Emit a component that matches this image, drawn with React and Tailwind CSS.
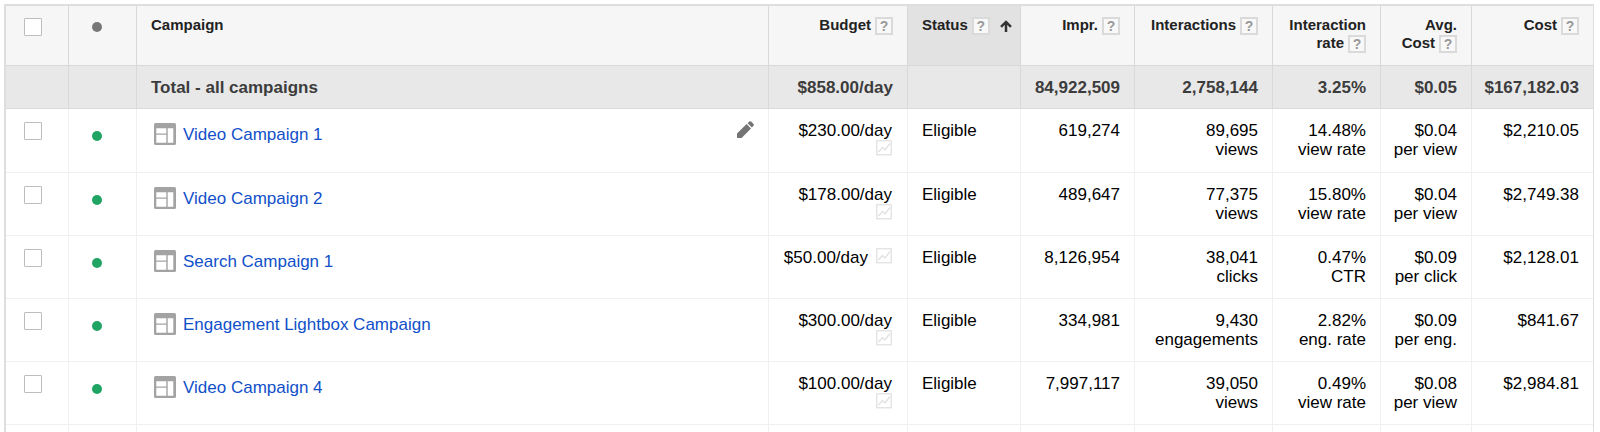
import React from 'react';

const campaigns = [
  { name: 'Video Campaign 1', editable: true, budget: '$230.00/day', impr: '619,274', inter: ['89,695', 'views'], rate: ['14.48%', 'view rate'], avg: ['$0.04', 'per view'], cost: '$2,210.05' },
  { name: 'Video Campaign 2', budget: '$178.00/day', impr: '489,647', inter: ['77,375', 'views'], rate: ['15.80%', 'view rate'], avg: ['$0.04', 'per view'], cost: '$2,749.38' },
  { name: 'Search Campaign 1', budget: '$50.00/day', inline: true, impr: '8,126,954', inter: ['38,041', 'clicks'], rate: ['0.47%', 'CTR'], avg: ['$0.09', 'per click'], cost: '$2,128.01' },
  { name: 'Engagement Lightbox Campaign', budget: '$300.00/day', impr: '334,981', inter: ['9,430', 'engagements'], rate: ['2.82%', 'eng. rate'], avg: ['$0.09', 'per eng.'], cost: '$841.67' },
  { name: 'Video Campaign 4', budget: '$100.00/day', impr: '7,997,117', inter: ['39,050', 'views'], rate: ['0.49%', 'view rate'], avg: ['$0.08', 'per view'], cost: '$2,984.81' },
];

const Help = ({ label }) => (
  <button
    type="button"
    aria-label={`Help: ${label}`}
    className="ml-1 inline-flex h-[18px] w-[18px] items-center justify-center border-2 border-[#dadada] bg-[#f8f8f8] align-middle text-sm leading-none font-bold text-[#999]"
  >
    ?
  </button>
);

const Checkbox = ({ label }) => (
  <input
    type="checkbox"
    aria-label={label}
    className="mt-px ml-1 block h-[18px] w-[18px] appearance-none rounded-[1px] border border-[#bdbdbd] bg-white"
  />
);

const LayoutIcon = () => (
  <svg viewBox="0 0 22 22" className="h-[22px] w-[22px] shrink-0" aria-hidden="true">
    <rect width="22" height="22" rx="1.5" fill="#a3a3a3" />
    <path d="M2.3 5.2h10v5.4h-10zM2.3 11.7h10v8h-10zM13.7 5.2h5.6v14.5h-5.6z" fill="#fff" />
  </svg>
);

const PencilIcon = () => (
  <svg viewBox="0 0 17 17" className="h-[17px] w-[17px]" aria-hidden="true">
    <path
      fill="#757575"
      d="M0 17v-4.6L9.6 3.1l4.4 4.4L4.6 17zM10.6 2.2l1.7-1.6q1-.8 1.9 0l2.3 2.3q.8.9 0 1.8l-1.6 1.8z"
    />
  </svg>
);

const ChartIcon = () => (
  <svg viewBox="0 0 16 16" className="h-4 w-4" fill="none" stroke="#e2e2e2" aria-hidden="true">
    <rect x="0.75" y="0.75" width="14.5" height="14" strokeWidth="1.3" />
    <path d="M2.5 12l4-4.5 2.5 2.5 5-6.5" strokeWidth="1.4" />
  </svg>
);

const head = 'border-r border-b border-[#d9d9d9] px-[14px] pt-[10px] align-top text-[15px] leading-[18px] font-bold text-[#222]';
const total = 'border-r border-b border-[#d9d9d9] px-[14px] pt-px align-middle text-[17px] font-bold text-[#3c3c3c]';
const cell = 'border-r border-b border-[#f0f0f0] px-[14px] pt-3 align-top text-[17px] leading-[19px] whitespace-nowrap text-black';

const Stacked = ({ lines }) => (
  <td className={`${cell} pl-1 text-right`}>
    {lines[0]}
    <br />
    {lines[1]}
  </td>
);

const App = () => {
  return (
    <main className="pt-1 pr-[6px] pl-1 font-['Liberation_Sans',Arial,sans-serif]">
      <table className="w-full table-fixed border-separate border-spacing-0 border-t-2 border-r border-l-2 border-[#dedede]">
        <colgroup>
          <col className="w-[63px]" />
          <col className="w-[68px]" />
          <col />
          <col className="w-[139px]" />
          <col className="w-[113px]" />
          <col className="w-[114px]" />
          <col className="w-[138px]" />
          <col className="w-[108px]" />
          <col className="w-[91px]" />
          <col className="w-[121px]" />
        </colgroup>
        <thead>
          <tr className="h-[60px] bg-[#f6f6f6]">
            <th className={`${head} pt-[11px]`}><Checkbox label="Select all campaigns" /></th>
            <th className={head}>
              <span className="mt-[6px] ml-[9px] block h-[10px] w-[10px] rounded-full bg-[#777]" />
            </th>
            <th className={`${head} text-left`}>Campaign</th>
            <th className={`${head} text-right`}>Budget<Help label="Budget" /></th>
            <th className={`${head} bg-[#e2e2e2] text-left whitespace-nowrap`}>
              Status<Help label="Status" />
              <svg viewBox="0 0 12 12" className="ml-[10px] inline h-3 w-3" fill="none" stroke="#333" strokeWidth="2.5" aria-hidden="true">
                <path d="M6 12V2M1 6.8L6 1.9l5 4.9" />
              </svg>
            </th>
            <th className={`${head} text-right`}>Impr.<Help label="Impressions" /></th>
            <th className={`${head} text-right whitespace-nowrap`}>Interactions<Help label="Interactions" /></th>
            <th className={`${head} text-right`}>Interaction<br />rate<Help label="Interaction rate" /></th>
            <th className={`${head} text-right`}>Avg.<br />Cost<Help label="Average cost" /></th>
            <th className={`${head} border-r-0 text-right`}>Cost<Help label="Cost" /></th>
          </tr>
        </thead>
        <tbody>
          <tr className="h-[43px] bg-[#e8e8e8]">
            <td className={total} />
            <td className={total} />
            <td className={total}>Total - all campaigns</td>
            <td className={`${total} pl-1 text-right`}>$858.00/day</td>
            <td className={total} />
            <td className={`${total} pl-1 text-right`}>84,922,509</td>
            <td className={`${total} pl-1 text-right`}>2,758,144</td>
            <td className={`${total} pl-1 text-right`}>3.25%</td>
            <td className={`${total} pl-1 text-right`}>$0.05</td>
            <td className={`${total} border-r-0 pl-1 text-right`}>$167,182.03</td>
          </tr>

          {campaigns.map((c) => (
            <tr key={c.name} className="h-[63px] nth-2:h-16">
              <td className={cell}><Checkbox label={`Select ${c.name}`} /></td>
              <td className={cell}>
                <span className="mt-[10px] ml-[9px] block h-[10px] w-[10px] rounded-full bg-[#1fa463]" />
              </td>
              <td className={cell}>
                <div className="flex items-start pl-[3px]">
                  <a href="#" className="mt-[2px] flex items-center gap-[7px] text-[#1150c9]">
                    <LayoutIcon />
                    {c.name}
                  </a>
                  {c.editable && (
                    <button type="button" aria-label={`Edit ${c.name}`} className="ml-auto">
                      <PencilIcon />
                    </button>
                  )}
                </div>
              </td>
              <td className={`${cell} pr-[15px] pl-1`}>
                <div className={c.inline ? 'flex justify-end gap-2' : 'flex flex-col items-end'}>
                  {c.budget}
                  <ChartIcon />
                </div>
              </td>
              <td className={cell}>Eligible</td>
              <td className={`${cell} pl-1 text-right`}>{c.impr}</td>
              <Stacked lines={c.inter} />
              <Stacked lines={c.rate} />
              <Stacked lines={c.avg} />
              <td className={`${cell} border-r-0 pl-1 text-right`}>{c.cost}</td>
            </tr>
          ))}

          {/* top edge of the next, empty row */}
          <tr className="h-[7px]" aria-hidden="true">
            {Array.from({ length: 10 }, (_, i) => (
              <td key={i} className="border-r border-[#f0f0f0] last:border-r-0" />
            ))}
          </tr>
        </tbody>
      </table>
    </main>
  );
};

export default App;
